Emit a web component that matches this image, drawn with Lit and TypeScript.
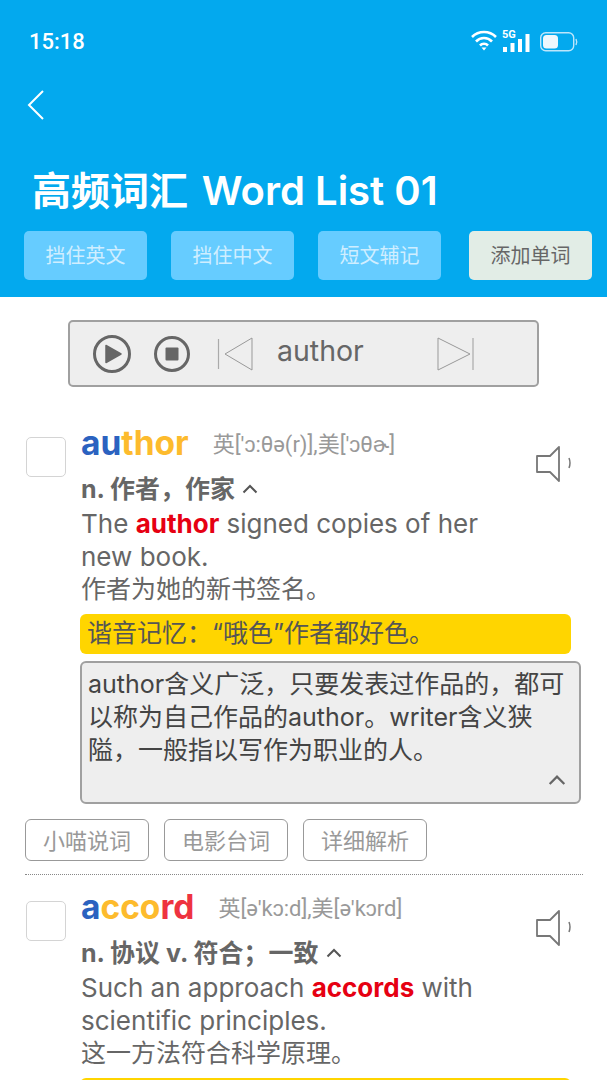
import { LitElement, html, css, svg } from 'lit';
import { customElement } from 'lit/decorators.js';

type Seg = [string, string];

interface Entry {
  word: Seg[];
  phonetic: string;
  meaning: string;
  sentence: unknown;
  zh: string;
  tip?: string;
}

const entries: Entry[] = [
  {
    word: [['au', 'b'], ['thor', 'y']],
    phonetic: "英['ɔ:θə(r)],美['ɔθɚ]",
    meaning: 'n. 作者，作家',
    sentence: html`The <b>author</b> signed copies of her new book.`,
    zh: '作者为她的新书签名。',
    tip: '谐音记忆：“哦色”作者都好色。',
  },
  {
    word: [['a', 'b'], ['cco', 'y'], ['rd', 'r']],
    phonetic: "英[ə'kɔ:d],美[ə'kɔrd]",
    meaning: 'n. 协议 v. 符合；一致',
    sentence: html`Such an approach <b>accords</b> with scientific principles.`,
    zh: '这一方法符合科学原理。',
    tip: ' ',
  },
];

const chevronUp = (cls: string) => html`<svg class=${cls} viewBox="0 0 16 10">
  <path d="M1.5 8.5 8 2l6.5 6.5" fill="none" stroke="currentColor" stroke-width="2" />
</svg>`;

const speaker = html`<svg class="speaker" viewBox="0 0 38 40">
  <path d="M1 13h13l9-9v34l-9-9H1z" fill="none" stroke="#777" stroke-width="1.8" stroke-linejoin="round" />
  <path d="M33 15q2 5 0 10" fill="none" stroke="#777" stroke-width="1.5" />
</svg>`;

@customElement('app-root')
export class AppRoot extends LitElement {
  static styles = css`
    :host {
      display: block;
      height: 1080px;
      overflow: hidden;
      background: #fff;
      font-family: Inter, 'Noto Sans CJK SC', sans-serif;
    }

    .header {
      background: #03a9ee;
      height: 297px;
      display: flex;
      flex-direction: column;
      color: #fff;
    }

    .status {
      height: 82px;
      padding: 0 29px;
      display: flex;
      align-items: center;
      justify-content: space-between;
    }

    .status__time {
      font-family: Roboto, sans-serif;
      font-size: 22px;
      font-weight: 500;
    }

    .status__icons {
      display: block;
      width: 108px;
      height: 24px;
      margin-right: -1px;
    }

    .back {
      display: block;
      width: 20px;
      height: 32px;
      margin: 6px 0 0 26px;
    }

    .title {
      margin: 46px 0 0 32px;
      height: 50px;
      font-size: 39px;
      line-height: 50px;
      font-weight: 600;
      white-space: nowrap;
    }

    .title__latin {
      margin-left: 4px;
      font-size: 40px;
    }

    .tabs {
      display: flex;
      gap: 24px;
      padding: 15px 15px 0 24px;
    }

    .tab {
      width: 123px;
      height: 49px;
      box-sizing: border-box;
      padding-bottom: 3px;
      border-radius: 5px;
      background: #66ccff;
      color: #d0eeff;
      font-size: 20px;
      display: flex;
      align-items: center;
      justify-content: center;
    }

    .tab--add {
      margin-left: auto;
      background: #e2ede6;
      color: #666;
    }

    .player {
      margin: 23px 0 0 68px;
      width: 471px;
      height: 67px;
      box-sizing: border-box;
      border: 2px solid #a0a0a0;
      border-radius: 5px;
      background: #eee;
      display: flex;
      align-items: center;
      color: #666;
    }

    .player__play {
      width: 40px;
      height: 40px;
      margin-left: 22px;
    }

    .player__stop {
      width: 38px;
      height: 38px;
      margin-left: 21px;
    }

    .player__prev {
      width: 36px;
      height: 36px;
      margin-left: 26px;
    }

    .player__word {
      width: 160px;
      margin-left: 24px;
      font-size: 28.5px;
      line-height: 1;
      padding-bottom: 5px;
    }

    .player__next {
      width: 38px;
      height: 38px;
    }

    .entry {
      padding: 8px 24px 0 26px;
    }

    .entry:first-of-type {
      padding-top: 32px;
    }

    .entry__top {
      display: flex;
    }

    .check {
      flex: none;
      width: 40px;
      height: 40px;
      box-sizing: border-box;
      margin: 18px 15px 0 0;
      border: 1.5px solid #d4d4d4;
      border-radius: 5px;
    }

    .entry__main {
      width: 442px;
      flex: none;
      color: #666;
    }

    .head {
      height: 54px;
      margin-top: -1px;
      display: flex;
      align-items: baseline;
      white-space: nowrap;
    }

    .word {
      font-size: 33.5px;
      font-weight: 700;
      line-height: 50px;
      margin-right: 24px;
    }

    .word .b { color: #2b62c0; }
    .word .y { color: #fdbb2d; }
    .word .r { color: #ee3340; }

    .phonetic {
      font-family: Roboto, 'Noto Sans CJK SC', sans-serif;
      font-size: 22px;
      color: #999;
      position: relative;
      top: -3px;
    }

    .meaning {
      font-size: 25px;
      font-weight: 700;
      line-height: 34px;
      height: 34px;
      margin-bottom: 1px;
      display: flex;
      align-items: center;
      gap: 7px;
      white-space: nowrap;
    }

    .meaning__arrow {
      width: 16px;
      height: 10px;
      color: #555;
    }

    .sentence {
      font-size: 26px;
      line-height: 33px;
    }

    .sentence b {
      color: #e60012;
      font-weight: 700;
    }

    .sentence__zh {
      font-size: 25px;
    }

    .speaker {
      flex: none;
      width: 38px;
      height: 40px;
      margin: 24px 0 0 13px;
    }

    .tip {
      margin: 8px 0 0 54px;
      width: 491px;
      height: 40px;
      box-sizing: border-box;
      padding-left: 7px;
      border-radius: 6px;
      background: #ffd500;
      color: #555;
      font-size: 25px;
      line-height: 38px;
      white-space: nowrap;
    }

    .note {
      position: relative;
      margin: 7px 0 0 54px;
      width: 501px;
      height: 143px;
      box-sizing: border-box;
      padding: 5px 6px;
      border: 2px solid #a0a0a0;
      border-radius: 6px;
      background: #eee;
      color: #444;
      font-size: 25px;
      line-height: 33px;
    }

    .note__arrow {
      position: absolute;
      right: 13px;
      bottom: 16px;
      width: 18px;
      height: 12px;
      color: #666;
    }

    .actions {
      display: flex;
      gap: 15px;
      margin: 15px 0 0 -1px;
    }

    .action {
      width: 124px;
      height: 42px;
      box-sizing: border-box;
      padding-bottom: 3px;
      border: 1.5px solid #999;
      border-radius: 6px;
      color: #999;
      font-size: 22px;
      display: flex;
      align-items: center;
      justify-content: center;
    }

    .divider {
      margin: 13px 0 0 -1px;
      height: 0;
      width: 558px;
      border-top: 1px dotted #888;
    }
  `;

  private renderEntry(e: Entry, last: boolean) {
    return html`<section class="entry">
      <div class="entry__top">
        <div class="check"></div>
        <div class="entry__main">
          <div class="head">
            <span class="word">${e.word.map(([t, c]) => html`<span class=${c}>${t}</span>`)}</span>
            <span class="phonetic">${e.phonetic}</span>
          </div>
          <div class="meaning">${e.meaning}${chevronUp('meaning__arrow')}</div>
          <div class="sentence">
            ${e.sentence}
            <div class="sentence__zh">${e.zh}</div>
          </div>
        </div>
        ${speaker}
      </div>
      <div class="tip">${e.tip}</div>
      ${last
        ? ''
        : html`<div class="note">
              author含义广泛，只要发表过作品的，都可<br />以称为自己作品的author。writer含义狭<br />隘，一般指以写作为职业的人。
              ${chevronUp('note__arrow')}
            </div>
            <div class="actions">
              <div class="action">小喵说词</div>
              <div class="action">电影台词</div>
              <div class="action">详细解析</div>
            </div>
            <div class="divider"></div>`}
    </section>`;
  }

  render() {
    return html`
      <div class="header">
        <div class="status">
          <span class="status__time">15:18</span>
          <svg class="status__icons" viewBox="0 0 108 24">
            ${svg`
              <g fill="none" stroke="#fff" stroke-width="2.6">
                <path d="M1 8a17 17 0 0 1 24 0" />
                <path d="M5 12.5a11 11 0 0 1 16 0" />
                <path d="M9 16.5a5.5 5.5 0 0 1 8 0" />
              </g>
              <path d="M10.5 18.5h5l-2.5 3z" fill="#fff" />
              <text x="31" y="9" font-size="11" font-weight="700" fill="#fff" font-family="Roboto, sans-serif">5G</text>
              <g fill="#fff">
                <rect x="32" y="18" width="4" height="5" />
                <rect x="39.5" y="14" width="4" height="9" />
                <rect x="47" y="10" width="4" height="13" />
                <rect x="54.5" y="5" width="4" height="18" />
              </g>
              <rect x="69.7" y="3.7" width="33" height="18" rx="5" fill="none" stroke="#bde6fb" stroke-width="1.4" />
              <rect x="72" y="6" width="15" height="13.5" rx="3.5" fill="#eef7fd" />
              <path d="M105 10q1.5 3 0 6" fill="none" stroke="#bde6fb" stroke-width="1.4" />
            `}
          </svg>
        </div>
        <svg class="back" viewBox="0 0 20 32">
          <path d="M17 3 3 17l14 14" fill="none" stroke="#fff" stroke-width="2" />
        </svg>
        <div class="title">高频词汇 <span class="title__latin">Word List 01</span></div>
        <div class="tabs">
          <div class="tab">挡住英文</div>
          <div class="tab">挡住中文</div>
          <div class="tab">短文辅记</div>
          <div class="tab tab--add">添加单词</div>
        </div>
      </div>

      <div class="player">
        <svg class="player__play" viewBox="0 0 40 40">
          <circle cx="20" cy="20" r="17.5" fill="none" stroke="#666" stroke-width="3" />
          <path d="M14 11.5 29 20l-15 8.5z" fill="#666" stroke="#666" stroke-width="1.5" stroke-linejoin="round" />
        </svg>
        <svg class="player__stop" viewBox="0 0 38 38">
          <circle cx="19" cy="19" r="16.5" fill="none" stroke="#666" stroke-width="3" />
          <rect x="12.5" y="12.5" width="13" height="13" rx="1" fill="#666" />
        </svg>
        <svg class="player__prev" viewBox="0 0 36 36">
          <path d="M1.5 3v30" stroke="#aaa" stroke-width="1.2" fill="none" />
          <path d="M35 2v32L8 18z" stroke="#999" stroke-width="1" fill="none" />
        </svg>
        <span class="player__word">author</span>
        <svg class="player__next" viewBox="0 0 38 38">
          <path d="M1 3v32l32-16z" stroke="#999" stroke-width="1" fill="none" />
          <path d="M36 3v32" stroke="#aaa" stroke-width="1.2" fill="none" />
        </svg>
      </div>

      ${entries.map((e, i) => this.renderEntry(e, i === entries.length - 1))}
    `;
  }
}
